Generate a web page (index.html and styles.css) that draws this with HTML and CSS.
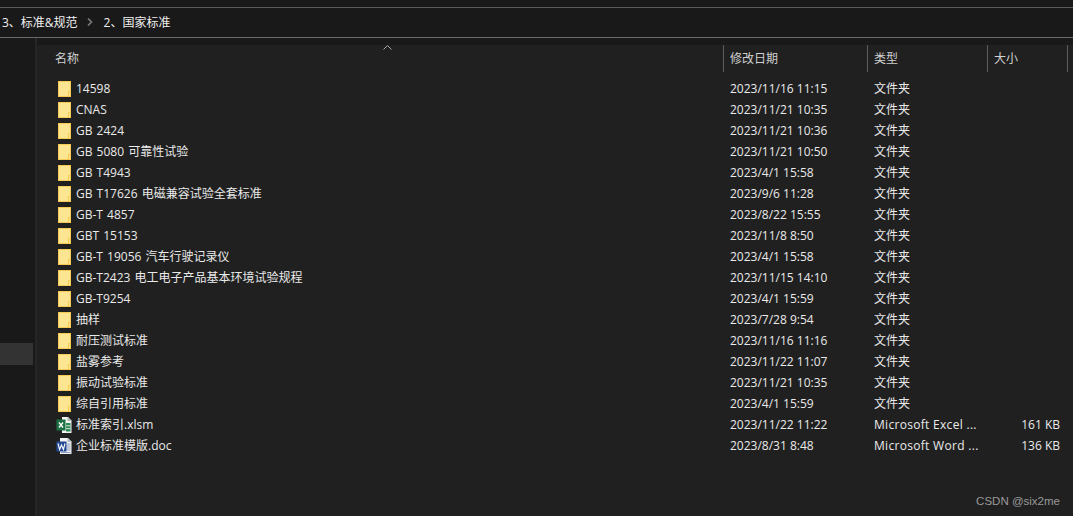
FILE: index.html
```html
<!DOCTYPE html>
<html lang="zh-CN">
<head>
    <meta charset="UTF-8">
    <title>2、国家标准</title>
    <link rel="stylesheet" href="styles.css">
</head>
<body>
    <div class="topstrip"></div>
    <div class="addressbar">
        <span>3、标准&amp;规范</span>
        <svg class="crumb-arrow" width="6" height="8" viewBox="0 0 6 8"><path d="M1 0.5 L4.5 4 L1 7.5" fill="none" stroke="#7a7a7a" stroke-width="1.6"/></svg>
        <span>2、国家标准</span>
    </div>
    <div class="explorer">
        <div class="sidebar">
            <div class="sidebar-selected"></div>
        </div>
        <div class="files">
            <svg class="sort-arrow" width="9" height="5" viewBox="0 0 9 5"><path d="M0.5 4.5 L4.5 0.5 L8.5 4.5" fill="none" stroke="#a8a8a8"/></svg>
            <div class="files-top"></div>
            <div class="row header">
                <div class="col-name">名称</div>
                <div class="col-date">修改日期</div>
                <div class="col-type">类型</div>
                <div class="col-size">大小</div>
            </div>
            <div id="rows" class="rows"></div>
        </div>
    </div>
    <div class="watermark">CSDN @six2me</div>

    <svg class="defs" width="0" height="0">
        <symbol id="folder" viewBox="0 0 16 16">
            <path d="M1 0 H14 V16 H1 Z" fill="#f7cb52"/>
            <path d="M2 1 H13 V15 H2 Z" fill="#fee592"/>
            <path d="M11.5 15 V10.5 H13" fill="none" stroke="#f7cb52"/>
        </symbol>
        <symbol id="xlsm" viewBox="0 0 16 16">
            <path d="M6 0 H12 L15.5 3.5 V16 H6 Z" fill="#f2f2f2"/>
            <path d="M11.5 0 V4 H15.5" fill="#aab8ae"/>
            <rect x="10" y="6" width="4.5" height="8.5" fill="#2d8a55"/>
            <path d="M10 8.8 H14.5 M10 11.6 H14.5" stroke="#f2f2f2" stroke-width="0.8"/>
            <rect x="0.5" y="2.5" width="9" height="11" fill="#1d7044"/>
            <path d="M3 5.5 L7 10.5 M7 5.5 L3 10.5" stroke="#fff" stroke-width="1.3"/>
        </symbol>
        <symbol id="doc" viewBox="0 0 16 16">
            <path d="M4 0 H12 L15.5 3.5 V16 H4 Z" fill="#f2f2f2"/>
            <path d="M11.5 0 V4 H15.5" fill="#aeb8cc"/>
            <path d="M10.5 6 H14.5 M10.5 8 H14.5 M10.5 10 H14.5 M10.5 12 H14.5 M5 14.5 H14.5" stroke="#7f93b8" stroke-width="0.9"/>
            <rect x="0.5" y="3.5" width="10" height="10" fill="#234a93"/>
            <path d="M2 5.5 L3.6 11.5 L5.5 7 L7.4 11.5 L9 5.5" fill="none" stroke="#fff" stroke-width="1.1"/>
        </symbol>
    </svg>

    <script src="script.js"></script>
</body>
</html>
```

FILE: styles.css
```css
html, body {
    margin: 0;
    height: 100%;
    overflow: hidden;
}
body {
    display: flex;
    flex-direction: column;
    position: relative;
    background-color: #202020;
    color: #eaeaea;
    font-family: "Open Sans", "Noto Sans CJK SC", sans-serif;
    font-size: 12px;
}
.defs {
    position: absolute;
}
.topstrip {
    height: 7px;
    flex: none;
    background-color: #191919;
    border-bottom: 1px solid #5a5a5a;
}
.addressbar {
    height: 27px;
    padding: 0 0 2px 2px;
    flex: none;
    display: flex;
    align-items: center;
    gap: 9px;
    background-color: #191919;
    border-bottom: 1px solid #6a6a6a;
    color: #f0f0f0;
}
.crumb-arrow {
    margin: 0 2px 0 0;
}
.explorer {
    flex: 1;
    display: flex;
    min-height: 0;
}
.sidebar {
    width: 35px;
    flex: none;
    padding-top: 305px;
    background-color: #191919;
    border-right: 2px solid #262626;
}
.sidebar-selected {
    width: 33px;
    height: 22px;
    background-color: #333333;
}
.files {
    flex: 1;
    position: relative;
}
.files-top {
    height: 7px;
    background-color: #191919;
}
.sort-arrow {
    position: absolute;
    left: 346px;
    top: 7px;
}
.row {
    display: flex;
    height: 21px;
    line-height: 21px;
    white-space: nowrap;
}
.header {
    height: 27px;
    line-height: 27px;
    color: #d0d0d0;
    margin-bottom: 6px;
}
.header .col-date, .header .col-type, .header .col-size {
    border-left: 1px solid #5c5c5c;
    padding-left: 6px;
}
.header .col-size {
    width: 81px;
    border-right: 1px solid #5c5c5c;
    text-align: left;
}
.col-name {
    width: 686px;
    flex: none;
    box-sizing: border-box;
    padding-left: 18px;
    display: flex;
    align-items: center;
    word-spacing: 1px;
}
.col-date {
    width: 144px;
    flex: none;
    padding-left: 7px;
    box-sizing: border-box;
}
.col-type {
    width: 120px;
    flex: none;
    padding-left: 7px;
    box-sizing: border-box;
    overflow: hidden;
}
.col-type-office {
    letter-spacing: 0.3px;
}
.col-size {
    width: 73px;
    flex: none;
    box-sizing: border-box;
    text-align: right;
}
.file-icon {
    width: 16px;
    height: 16px;
    margin-left: 2px;
    margin-right: 3px;
    flex: none;
}
.file-icon-office {
    margin-left: 1px;
    margin-right: 4px;
}
.watermark {
    position: absolute;
    right: 13px;
    bottom: 9px;
    color: #9a9a9a;
    font-family: "Liberation Sans", sans-serif;
    font-size: 11.5px;
}
```

FILE: script.js
```js
const files = [
    ['folder', '14598', '2023/11/16 11:15', '文件夹', ''],
    ['folder', 'CNAS', '2023/11/21 10:35', '文件夹', ''],
    ['folder', 'GB 2424', '2023/11/21 10:36', '文件夹', ''],
    ['folder', 'GB 5080 可靠性试验', '2023/11/21 10:50', '文件夹', ''],
    ['folder', 'GB T4943', '2023/4/1 15:58', '文件夹', ''],
    ['folder', 'GB T17626 电磁兼容试验全套标准', '2023/9/6 11:28', '文件夹', ''],
    ['folder', 'GB-T 4857', '2023/8/22 15:55', '文件夹', ''],
    ['folder', 'GBT 15153', '2023/11/8 8:50', '文件夹', ''],
    ['folder', 'GB-T 19056 汽车行驶记录仪', '2023/4/1 15:58', '文件夹', ''],
    ['folder', 'GB-T2423 电工电子产品基本环境试验规程', '2023/11/15 14:10', '文件夹', ''],
    ['folder', 'GB-T9254', '2023/4/1 15:59', '文件夹', ''],
    ['folder', '抽样', '2023/7/28 9:54', '文件夹', ''],
    ['folder', '耐压测试标准', '2023/11/16 11:16', '文件夹', ''],
    ['folder', '盐雾参考', '2023/11/22 11:07', '文件夹', ''],
    ['folder', '振动试验标准', '2023/11/21 10:35', '文件夹', ''],
    ['folder', '综自引用标准', '2023/4/1 15:59', '文件夹', ''],
    ['xlsm', '标准索引.xlsm', '2023/11/22 11:22', 'Microsoft Excel ...', '161 KB'],
    ['doc', '企业标准模版.doc', '2023/8/31 8:48', 'Microsoft Word ...', '136 KB']
];

const rows = document.getElementById('rows');
files.forEach(([icon, name, date, type, size]) => {
    const office = icon !== 'folder';
    const row = document.createElement('div');
    row.className = 'row';
    row.innerHTML = `
        <div class="col-name"><svg class="file-icon${office ? ' file-icon-office' : ''}"><use href="#${icon}"/></svg>${name}</div>
        <div class="col-date">${date}</div>
        <div class="col-type${office ? ' col-type-office' : ''}">${type}</div>
        <div class="col-size">${size}</div>
    `;
    rows.appendChild(row);
});
```
